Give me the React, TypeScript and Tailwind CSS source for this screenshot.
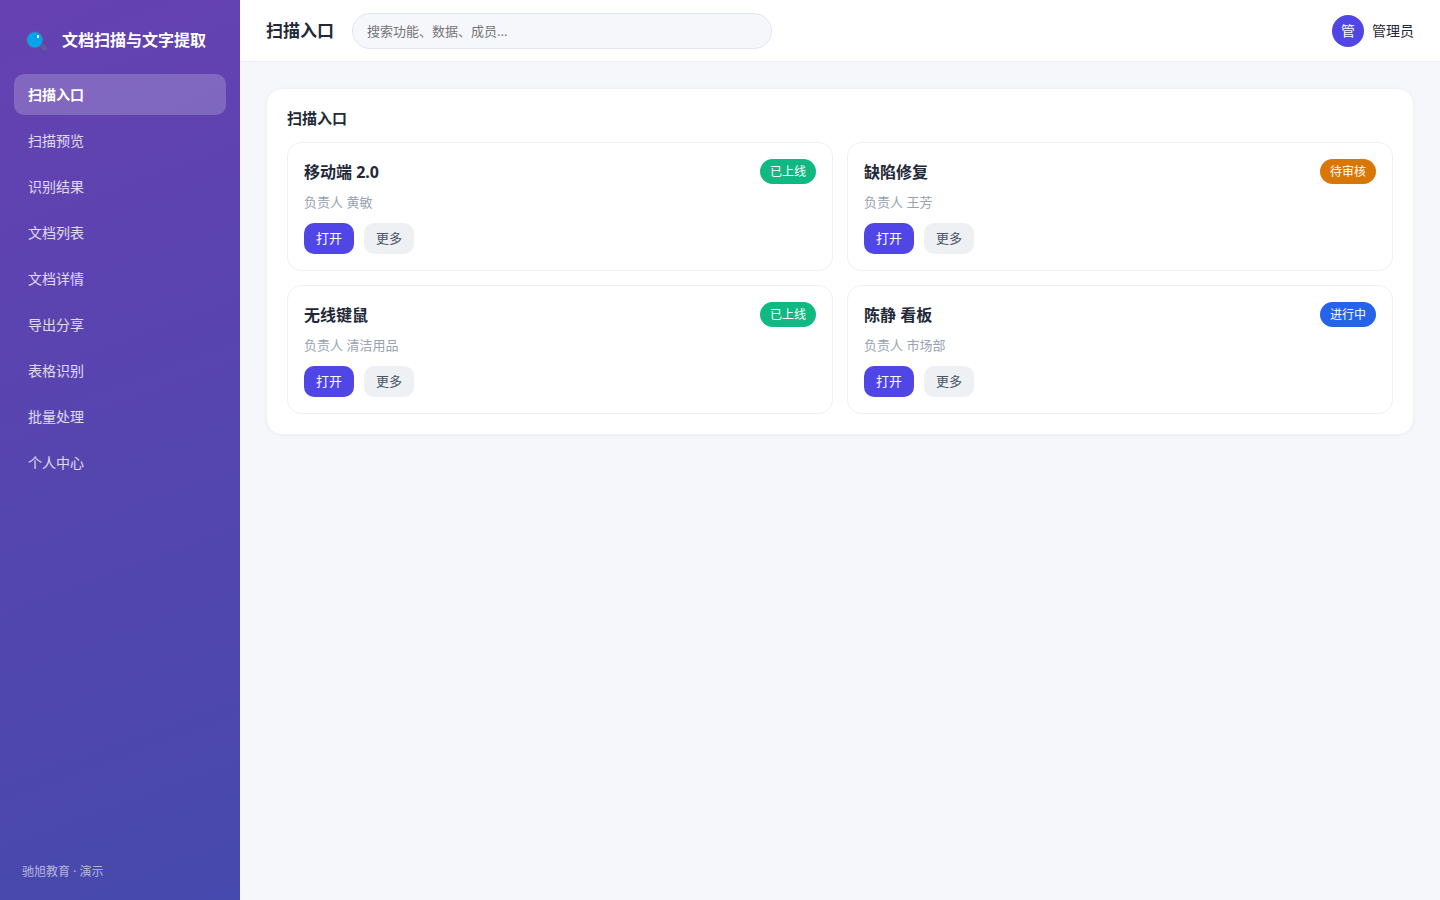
import { useState } from 'react';

const navItems = [
  '扫描入口',
  '扫描预览',
  '识别结果',
  '文档列表',
  '文档详情',
  '导出分享',
  '表格识别',
  '批量处理',
  '个人中心',
];

const cards = [
  { title: '移动端 2.0', owner: '黄敏', status: '已上线', badge: 'bg-[#10b981]' },
  { title: '缺陷修复', owner: '王芳', status: '待审核', badge: 'bg-[#d97706]' },
  { title: '无线键鼠', owner: '清洁用品', status: '已上线', badge: 'bg-[#10b981]' },
  { title: '陈静 看板', owner: '市场部', status: '进行中', badge: 'bg-[#2563eb]' },
];

function SearchLogo() {
  return (
    <svg className="h-6 w-6 shrink-0" viewBox="0 0 24 24" aria-hidden="true">
      <path d="M14 16 L19 20.5" stroke="#64589a" strokeWidth="4.5" strokeLinecap="round" />
      <circle cx="8.8" cy="11.8" r="8.6" fill="#64589a" />
      <circle cx="8.8" cy="11.8" r="7.6" fill="#00a4ef" />
      <rect x="11" y="7" width="2" height="3" fill="#ffffff" />
    </svg>
  );
}

function Sidebar({ active, onSelect }: { active: string; onSelect: (item: string) => void }) {
  return (
    <aside className="flex w-60 shrink-0 flex-col bg-[linear-gradient(160deg,#6641b1,#4649ad)] px-3.5 pt-5 pb-4 text-white">
      <div className="flex h-10 items-center gap-3 pl-3">
        <SearchLogo />
        <span className="text-base font-bold whitespace-nowrap">文档扫描与文字提取</span>
      </div>
      <nav className="mt-3.5 flex flex-col gap-[5px]">
        {navItems.map((item) => (
          <button
            key={item}
            onClick={() => onSelect(item)}
            className={`h-[41px] cursor-pointer rounded-[10px] px-3.5 text-left text-sm ${item === active ? 'bg-white/20 font-bold text-white' : 'text-white/80 hover:bg-white/10'}`}
          >
            {item}
          </button>
        ))}
      </nav>
      <p className="mt-auto px-2 text-xs leading-6 text-white/60">驰旭教育 · 演示</p>
    </aside>
  );
}

export default function App() {
  const [active, setActive] = useState('扫描入口');

  return (
    <div className="flex min-h-screen bg-[#f5f7fb] font-['Noto_Sans','Noto_Sans_CJK_SC',sans-serif] text-[#1f2937]">
      <Sidebar active={active} onSelect={setActive} />

      <div className="flex min-w-0 flex-1 flex-col">
        <header className="flex h-[62px] items-center border-b border-[#eceef3] bg-white px-[26px]">
          <h1 className="text-[17px] leading-6 font-bold whitespace-nowrap">{active}</h1>
          <input
            type="search"
            aria-label="搜索"
            placeholder="搜索功能、数据、成员..."
            className="ml-[18px] h-9 w-full max-w-[420px] rounded-full border border-[#e2e5ee] bg-[#f6f7fb] px-3.5 text-[13px] outline-none placeholder:text-[#757575]"
          />
          <div className="ml-auto flex items-center gap-2 text-sm">
            <span className="flex h-8 w-8 items-center justify-center rounded-full bg-[#4f46e5] text-white">管</span>
            <span className="whitespace-nowrap">管理员</span>
          </div>
        </header>

        <main className="p-[26px]">
          <section className="rounded-2xl border border-[#eff1f6] bg-white p-5 shadow-[0_1px_4px_rgba(31,41,55,0.04)]">
            <h2 className="mb-3.5 text-[15px] leading-[19px] font-bold">{active}</h2>
            <div className="grid grid-cols-2 gap-3.5">
              {cards.map((card) => (
                <article key={card.title} className="rounded-[14px] border border-[#eef0f4] p-4">
                  <div className="flex items-center justify-between">
                    <h3 className="text-base font-bold">{card.title}</h3>
                    <span className={`rounded-full px-2.5 text-xs leading-[25px] text-white ${card.badge}`}>
                      {card.status}
                    </span>
                  </div>
                  <p className="mt-2 text-[13px] leading-5 text-[#98a2b3]">负责人 {card.owner}</p>
                  <div className="mt-[11px] flex gap-2.5">
                    <button className="cursor-pointer rounded-[10px] bg-[#4f46e5] px-3 text-[13px] leading-[31px] text-white">
                      打开
                    </button>
                    <button className="cursor-pointer rounded-[10px] bg-[#eef0f4] px-3 text-[13px] leading-[31px] text-[#475569]">
                      更多
                    </button>
                  </div>
                </article>
              ))}
            </div>
          </section>
        </main>
      </div>
    </div>
  );
}
